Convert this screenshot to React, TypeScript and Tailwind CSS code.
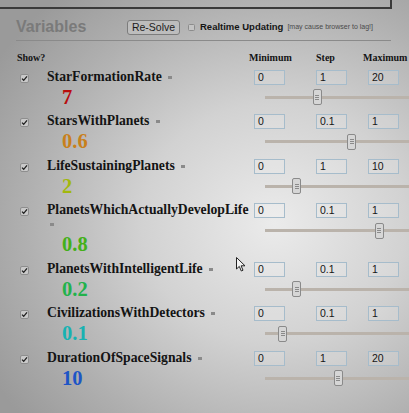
import React from 'react';

type Variable = {
  name: string;
  value: string;
  min: string;
  step: string;
  max: string;
  frac: number;
  color: string;
};

const variables: Variable[] = [
  { name: 'StarFormationRate', value: '7', min: '0', step: '1', max: '20', frac: 0.35, color: 'text-[#b80d0d]' },
  { name: 'StarsWithPlanets', value: '0.6', min: '0', step: '0.1', max: '1', frac: 0.6, color: 'text-[#c8801c]' },
  { name: 'LifeSustainingPlanets', value: '2', min: '0', step: '1', max: '10', frac: 0.2, color: 'text-[#a2b80c]' },
  { name: 'PlanetsWhichActuallyDevelopLife', value: '0.8', min: '0', step: '0.1', max: '1', frac: 0.8, color: 'text-[#44b01a]' },
  { name: 'PlanetsWithIntelligentLife', value: '0.2', min: '0', step: '0.1', max: '1', frac: 0.2, color: 'text-[#22b24c]' },
  { name: 'CivilizationsWithDetectors', value: '0.1', min: '0', step: '0.1', max: '1', frac: 0.1, color: 'text-[#17b2b2]' },
  { name: 'DurationOfSpaceSignals', value: '10', min: '0', step: '1', max: '20', frac: 0.5, color: 'text-[#1d55c6]' },
];

function CheckMark() {
  return (
    <svg width="9" height="9" viewBox="0 0 9 9" className="block">
      <rect x="0.5" y="0.5" width="8" height="8" rx="1.5" fill="#c9c9c9" stroke="#8e8e8e" />
      <path d="M2 4.6 L3.7 6.3 L7 2.4" fill="none" stroke="#1e1e1e" strokeWidth="1.3" />
    </svg>
  );
}

function NumBox({ v, className }: { v: string; className?: string }) {
  return (
    <div
      className={
        'w-[31px] h-[15px] shrink-0 border border-[#a6bccb] bg-white/15 pl-[3px] text-[10.5px] leading-[13px] text-[#151515] ' +
        (className ?? '')
      }
    >
      {v}
    </div>
  );
}

function Slider({ frac }: { frac: number }) {
  return (
    <div className="relative ml-[15.5px] mt-[4.5px] h-[16px] w-[150px] shrink-0">
      <div className="absolute left-0 right-0 top-[6.5px] h-[3px] bg-[#bab3ab]" />
      <div
        className="absolute top-0 flex h-[16px] w-[9px] flex-col items-center justify-center gap-[1px] rounded-[2px] border border-[#8a8a8a] bg-[#d6d6d6]"
        style={{ left: `${frac * 138}px` }}
      >
        <div className="h-px w-[4px] bg-[#8a8a8a]" />
        <div className="h-px w-[4px] bg-[#8a8a8a]" />
        <div className="h-px w-[4px] bg-[#8a8a8a]" />
      </div>
    </div>
  );
}

function Row({ v }: { v: Variable }) {
  return (
    <div className="flex items-start pt-[2px] pb-[1px]">
      <div className="w-[33px] shrink-0 pl-[6px] pt-[4px]">
        <CheckMark />
      </div>
      <div className="w-[202px] shrink-0 font-['Liberation_Serif',serif]">
        <div className="text-[13.7px] font-bold leading-[14px] text-[#141414]">
          {v.name}{' '}
          <span className="ml-[3px] inline-block h-[3px] w-[4px] bg-[#8a8a8a] align-middle" />
        </div>
        <div className={'pl-[15px] text-[20.5px] font-bold leading-[27.5px] ' + v.color}>{v.value}</div>
      </div>
      <div className="flex shrink-0 flex-col font-['Liberation_Sans',sans-serif]">
        <div className="flex">
          <NumBox v={v.min} className="ml-[5px]" />
          <NumBox v={v.step} className="ml-[31px]" />
          <NumBox v={v.max} className="ml-[21px]" />
        </div>
        <Slider frac={v.frac} />
      </div>
    </div>
  );
}

export default function App() {
  return (
    <div className="relative h-[413px] w-[409px] overflow-hidden bg-[radial-gradient(ellipse_330px_300px_at_67%_54%,#ebebeb_0%,#d2d2d2_40%,#b0b0b0_75%,#9a9a9a_100%)] font-['Liberation_Sans',sans-serif]">
      <div className="h-[9px] w-[392px] border-b-2 border-r-2 border-[#3a3a3a]" />

      <div className="flex h-[31px] px-[16px]">
        <div className="mt-[9px] w-[111px] shrink-0 text-[16px] font-bold leading-[18px] text-[#7a7a7a]">Variables</div>
        <div className="mt-[11px] flex h-[15px] shrink-0 items-center whitespace-nowrap">
          <div className="flex h-[15.5px] w-[53px] items-center justify-center rounded-[3px] border border-[#7c7c7c] bg-[#bdbdbd] text-[10.5px] text-[#1c1c1c]">
            Re-Solve
          </div>
          <div className="ml-[8px] h-[7px] w-[7px] rounded-[1.5px] border border-[#8c8c8c] bg-[#c4c4c4]" />
          <div className="ml-[5px] text-[9.5px] font-bold text-[#151515]">Realtime Updating</div>
          <div className="ml-[4px] text-[7px] text-[#4a4a4a]">[may cause browser to lag!]</div>
        </div>
      </div>

      <div className="ml-[16px] h-[2px] w-[375px] border-t border-[#8a8a8a] border-b-[#c2c2c2]" />

      <div className="flex h-[25.5px] pl-[17px] pt-[10px] font-['Liberation_Serif',serif] text-[10px] font-bold leading-[12px] text-[#141414]">
        <div className="w-[232px] shrink-0">Show?</div>
        <div className="w-[67px] shrink-0">Minimum</div>
        <div className="w-[47px] shrink-0">Step</div>
        <div className="shrink-0 whitespace-nowrap">Maximum</div>
      </div>

      <div className="pl-[14px]">
        {variables.map((v) => (
          <Row key={v.name} v={v} />
        ))}
      </div>

      <svg
        className="absolute left-[236px] top-[257px]"
        width="11"
        height="15"
        viewBox="0 0 11 15"
      >
        <path d="M0.5 0.5 L0.5 12 L3.3 9.4 L5.3 14 L7 13.2 L5.1 8.8 L9 8.8 Z" fill="#f4f4f4" stroke="#222" strokeWidth="1" strokeLinejoin="round" />
      </svg>
    </div>
  );
}
